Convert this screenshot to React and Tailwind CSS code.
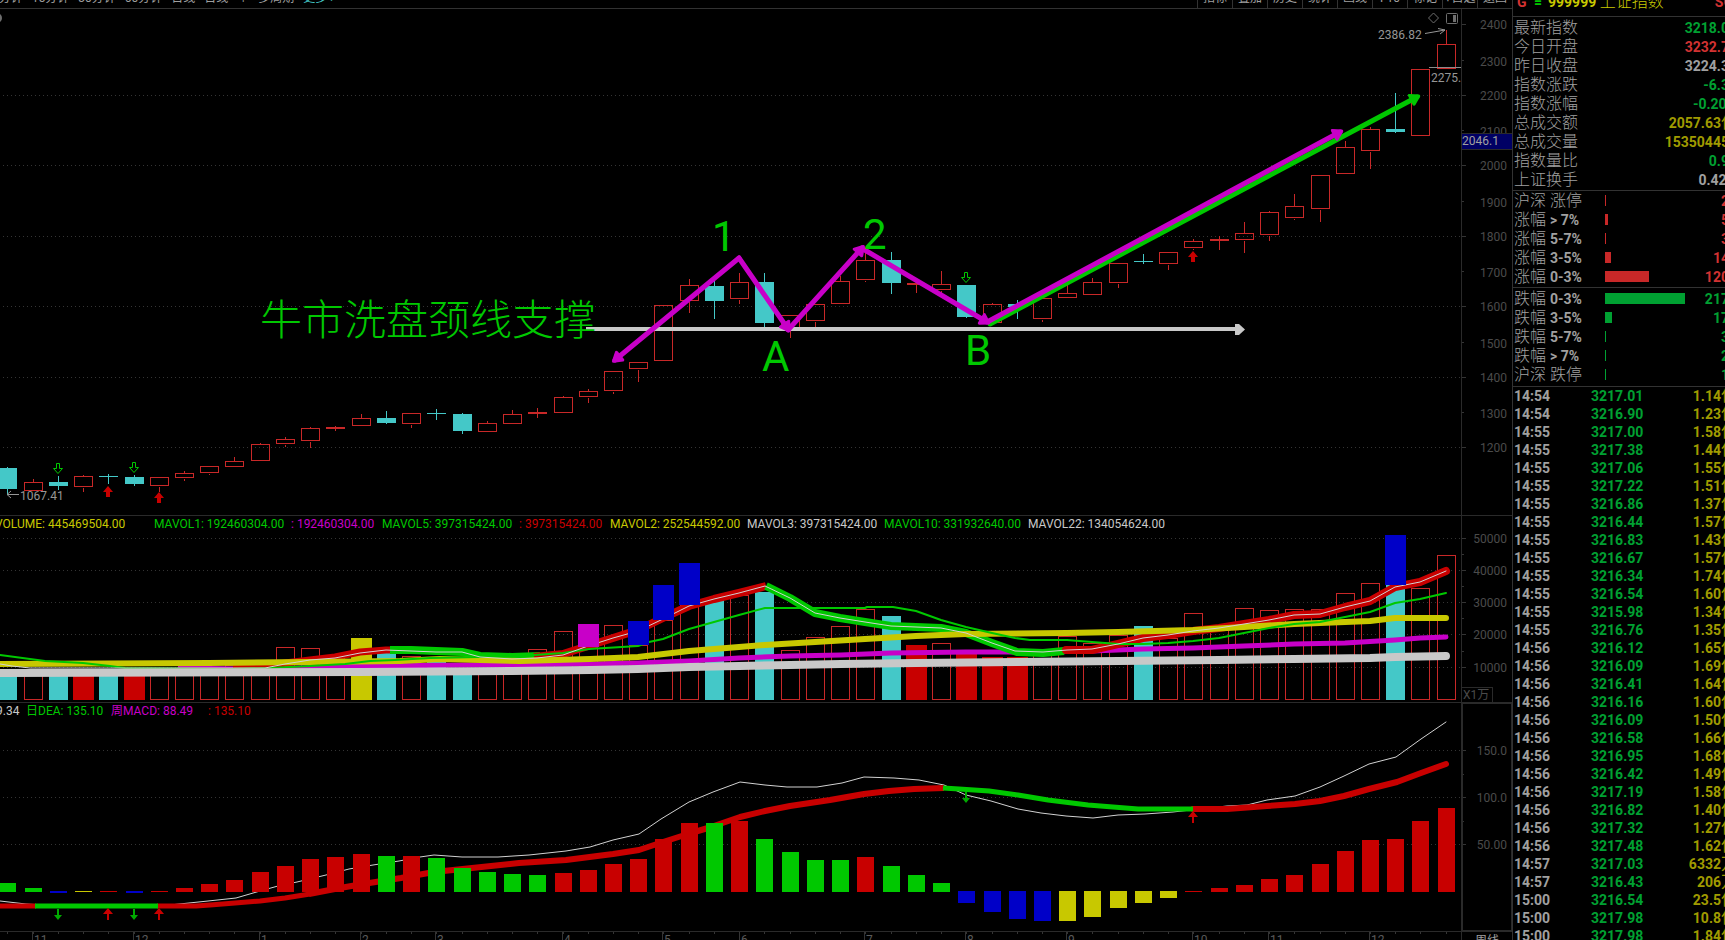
import React from "react";

const UI = "font-['Roboto','Noto_Sans_CJK_SC',sans-serif]";

/* ---------- shared geometry ---------- */

const AXIS_X = 1461;
const FULL_W = 1512;

// Column of the i-th weekly bar.
const col = (i) => Math.floor(7.896 + 25.2335 * i);

const RED = "#c82828";
const CYAN = "#44c8c8";
const LINE = "#2a2a2a";
const DOT = "#343434";
const FILL = { g: "#00c800", r: "#c80000", b: "#0000c8", y: "#c8c800", m: "#c800c8", c: CYAN };

/* ---------- data ---------- */

// kind: o = hollow rise, s = flat rise, c = fall; then high, top, bottom, low
const candles = [
  ["c", 467, 468, 489, 495], ["o", 479, 482, 491, 491], ["c", 476, 482, 486, 490], ["o", 475, 476, 487, 491],
  ["c", 474, 476, 477, 484], ["c", 475, 477, 484, 486], ["o", 477, 477, 486, 491], ["o", 471, 473, 478, 480],
  ["o", 466, 466, 473, 474], ["o", 457, 461, 467, 467], ["o", 443, 444, 461, 461], ["o", 437, 439, 444, 446],
  ["o", 427, 428, 441, 447], ["s", 426, 427, 429, 431], ["o", 414, 418, 426, 426], ["c", 411, 418, 423, 424],
  ["o", 413, 413, 424, 427], ["c", 409, 413, 414, 420], ["c", 413, 414, 431, 434], ["o", 421, 423, 432, 432],
  ["o", 410, 414, 424, 424], ["s", 408, 412, 414, 418], ["o", 396, 397, 413, 413], ["o", 389, 391, 397, 402],
  ["o", 371, 371, 391, 393], ["o", 362, 362, 369, 381], ["o", 305, 305, 361, 361], ["o", 279, 285, 301, 312],
  ["c", 281, 286, 301, 319], ["o", 273, 282, 299, 303], ["c", 273, 282, 323, 327], ["o", 315, 315, 330, 337],
  ["o", 304, 304, 321, 326], ["o", 276, 281, 304, 304], ["o", 252, 260, 280, 281], ["c", 252, 260, 283, 294],
  ["s", 281, 283, 285, 293], ["o", 271, 284, 290, 292], ["c", 285, 285, 317, 318], ["o", 303, 304, 323, 323],
  ["c", 300, 304, 307, 319], ["o", 298, 298, 319, 321], ["o", 285, 293, 298, 298], ["o", 278, 282, 295, 295],
  ["o", 263, 263, 283, 287], ["c", 254, 261, 262, 264], ["o", 252, 252, 264, 269], ["o", 239, 241, 248, 249],
  ["s", 236, 239, 241, 250], ["o", 222, 233, 240, 252], ["o", 211, 212, 235, 240], ["o", 194, 206, 218, 219],
  ["o", 175, 175, 209, 221], ["o", 141, 147, 174, 174], ["o", 127, 129, 151, 168], ["c", 93, 129, 132, 133],
  ["o", 69, 69, 136, 136], ["o", 30, 44, 69, 69],
];

// kind: o = hollow, c = fall, r / y = highlighted; then top
const volumes = [
  ["c", 672], ["o", 670], ["c", 670], ["r", 670], ["c", 670], ["r", 670], ["o", 670], ["o", 670], ["o", 670], ["o", 665],
  ["o", 666], ["o", 647], ["o", 648], ["o", 656], ["y", 638], ["c", 652], ["o", 656], ["c", 661], ["c", 668], ["o", 668],
  ["o", 655], ["o", 649], ["o", 631], ["o", 647], ["o", 625], ["o", 645], ["o", 620], ["o", 605], ["c", 600], ["o", 595],
  ["c", 592], ["o", 650], ["o", 637], ["o", 626], ["o", 609], ["c", 616], ["r", 645], ["o", 643], ["r", 654], ["r", 657],
  ["r", 657], ["o", 650], ["o", 636], ["o", 643], ["o", 635], ["c", 626], ["o", 638], ["o", 613], ["o", 626], ["o", 608],
  ["o", 610], ["o", 609], ["o", 609], ["o", 593], ["o", 583], ["c", 585], ["o", 588], ["o", 555],
];

// bar index, colour, top, bottom
const volumeCaps = [
  [23, "m", 624, 647], [25, "b", 621, 645], [26, "b", 585, 620], [27, "b", 563, 605], [55, "b", 535, 585],
];

// kind, far edge measured from the zero line
const macd = [
  ["g", 883], ["g", 888], ["b", 893], ["y", 892], ["r", 891], ["b", 893], ["r", 891], ["r", 888], ["r", 884], ["r", 880],
  ["r", 872], ["r", 866], ["r", 859], ["r", 857], ["r", 854], ["g", 856], ["r", 856], ["g", 858], ["g", 868], ["g", 872],
  ["g", 874], ["g", 875], ["r", 873], ["r", 870], ["r", 864], ["r", 859], ["r", 839], ["r", 823], ["g", 823], ["r", 821],
  ["g", 839], ["g", 852], ["g", 860], ["g", 860], ["r", 857], ["g", 866], ["g", 875], ["g", 883], ["b", 903], ["b", 912],
  ["b", 919], ["b", 921], ["y", 921], ["y", 917], ["y", 908], ["y", 903], ["y", 898], ["r", 891], ["r", 888], ["r", 885],
  ["r", 879], ["r", 875], ["r", 864], ["r", 851], ["r", 840], ["r", 839], ["r", 821], ["r", 808],
];

const priceAxis = [
  [2400, 24], [2300, 60], [2200, 95], [2100, 130], [2000, 165], [1900, 201], [1800, 236],
  [1700, 271], [1600, 306], [1500, 342], [1400, 377], [1300, 412], [1200, 447],
];

const months = [
  ["11", 32], ["12", 133], ["1", 259], ["2", 360], ["3", 435], ["4", 562], ["5", 662], ["6", 739],
  ["7", 864], ["8", 965], ["9", 1066], ["10", 1192], ["11", 1268], ["12", 1369],
];

const periods = ["5分钟", "15分钟", "30分钟", "60分钟", "日线", "日线", "↑", "多周期"];
const tools = ["指标", "叠加", "历史", "统计", "画线", "F10", "标记", "+自选", "返回"];

const GREEN_T = "text-[#00a032]";
const RED_T = "text-[#d23232]";
const GREY_T = "text-[#a0a0a0]";
const GOLD_T = "text-[#a09b00]";

const quotes = [
  ["最新指数", "3218.03", GREEN_T], ["今日开盘", "3232.75", RED_T], ["昨日收盘", "3224.36", GREY_T],
  ["指数涨跌", "-6.33", GREEN_T], ["指数涨幅", "-0.20%", GREEN_T], ["总成交额", "2057.63亿", GOLD_T],
  ["总成交量", "153504456", GOLD_T], ["指数量比", "0.91", GREEN_T], ["上证换手", "0.42%", GREY_T],
];

const risers = [
  ["沪深", "涨停", 1, "28"], ["涨幅", "> 7%", 3, "55"], ["涨幅", "5-7%", 1, "38"], ["涨幅", "3-5%", 6, "144"], ["涨幅", "0-3%", 44, "1206"],
];
const fallers = [
  ["跌幅", "0-3%", 80, "2175"], ["跌幅", "3-5%", 7, "175"], ["跌幅", "5-7%", 1, "38"], ["跌幅", "> 7%", 1, "24"], ["沪深", "跌停", 1, "11"],
];

const ticks = [
  ["14:54", "3217.01", "1.14亿"], ["14:54", "3216.90", "1.23亿"], ["14:55", "3217.00", "1.58亿"], ["14:55", "3217.38", "1.44亿"],
  ["14:55", "3217.06", "1.55亿"], ["14:55", "3217.22", "1.51亿"], ["14:55", "3216.86", "1.37亿"], ["14:55", "3216.44", "1.57亿"],
  ["14:55", "3216.83", "1.43亿"], ["14:55", "3216.67", "1.57亿"], ["14:55", "3216.34", "1.74亿"], ["14:55", "3216.54", "1.60亿"],
  ["14:55", "3215.98", "1.34亿"], ["14:55", "3216.76", "1.35亿"], ["14:56", "3216.12", "1.65亿"], ["14:56", "3216.09", "1.69亿"],
  ["14:56", "3216.41", "1.64亿"], ["14:56", "3216.16", "1.60亿"], ["14:56", "3216.09", "1.50亿"], ["14:56", "3216.58", "1.66亿"],
  ["14:56", "3216.95", "1.68亿"], ["14:56", "3216.42", "1.49亿"], ["14:56", "3217.19", "1.58亿"], ["14:56", "3216.82", "1.40亿"],
  ["14:56", "3217.32", "1.27亿"], ["14:56", "3217.48", "1.62亿"], ["14:57", "3217.03", "6332万"], ["14:57", "3216.43", "206万"],
  ["15:00", "3216.54", "23.5亿"], ["15:00", "3217.98", "10.8亿"], ["15:00", "3217.98", "1.84亿"],
];

/* ---------- drawing helpers ---------- */

function Grid({ rows }) {
  return rows.map((y) => (
    <g key={y}>
      <line x1="3" x2={AXIS_X} y1={y + 0.5} y2={y + 0.5} stroke={DOT} strokeDasharray="1 3" />
      <line x1={AXIS_X} x2={AXIS_X + 5} y1={y + 0.5} y2={y + 0.5} stroke={DOT} />
    </g>
  ));
}

function ShortTicks({ rows, size = 2 }) {
  return rows.map((y) => <rect key={y} x={AXIS_X + 1} y={y} width={size} height="1" fill={DOT} />);
}

function AxisLabel({ y, children }) {
  return (
    <text x="1507" y={y} textAnchor="end" className="text-[12px]" fill="#4b4b4b">
      {children}
    </text>
  );
}

function Arrow({ from, to, color }) {
  const dx = to[0] - from[0];
  const dy = to[1] - from[1];
  const len = Math.hypot(dx, dy);
  const ux = dx / len;
  const uy = dy / len;
  const tip = [to[0] + ux * 2, to[1] + uy * 2];
  const base = [to[0] - ux * 6, to[1] - uy * 6];
  const pts = [tip, [base[0] - uy * 5, base[1] + ux * 5], [base[0] + uy * 5, base[1] - ux * 5]];
  return (
    <g stroke={color} strokeLinecap="round" strokeLinejoin="round">
      <line x1={from[0]} y1={from[1]} x2={to[0]} y2={to[1]} strokeWidth="5" />
      <polygon points={pts.map((p) => p.join(",")).join(" ")} fill={color} strokeWidth="3" />
    </g>
  );
}

function HollowDown({ x, y }) {
  return (
    <path
      d={`M${x - 2 + 0.5} ${y + 0.5}h3v5h3l-4.5 5l-4.5 -5h3z`}
      fill="none"
      stroke="#00c800"
    />
  );
}

function SolidUp({ x, y }) {
  return <path d={`M${x} ${y}l5 6h-3v5h-4v-5h-3z`} fill="#c80000" />;
}

function SignalDown({ x, y }) {
  return <path d={`M${x - 1} ${y}h2v6h3l-4 5l-4 -5h3z`} fill="#00aa00" />;
}

function SignalUp({ x, y }) {
  return <path d={`M${x} ${y}l5 6h-4v6h-2v-6h-4z`} fill="#c80000" />;
}

function Poly({ points, color, width, cap = "round" }) {
  return (
    <polyline points={points} fill="none" stroke={color} strokeWidth={width} strokeLinejoin="round" strokeLinecap={cap} />
  );
}

/* ---------- panels ---------- */

function PricePanel() {
  return (
    <svg viewBox={`0 9 ${FULL_W} 507`} className="block h-auto w-full" role="img" aria-label="K线">
      <g shapeRendering="crispEdges">
        <Grid rows={[95, 165, 236, 306, 377, 447]} />
        <ShortTicks rows={[60, 130, 201, 271, 342, 412]} />
        <ShortTicks rows={[24]} size={4} />
        <rect x={AXIS_X} y="9" width="1" height="507" fill={LINE} />
        <rect x="0" y="515" width={FULL_W} height="1" fill={LINE} />
      </g>
      {priceAxis.map(([v, y], k) => (
        <AxisLabel key={v} y={y + (k % 2 ? 6 : 5)}>{v}</AxisLabel>
      ))}
      <g shapeRendering="crispEdges">
        <rect x={AXIS_X} y="133" width="51" height="17" fill={LINE} />
        <rect x={AXIS_X + 1} y="134" width="50" height="15" fill="#000064" />
      </g>
      <text x="1462" y="145" className="text-[12px]" fill="#a0a0a0">2046.1</text>

      <g shapeRendering="crispEdges">
        {candles.map(([kind, high, top, bottom, low], i) => {
          const c = col(i);
          if (kind === "o") {
            return (
              <g key={i} fill={RED}>
                {high < top && <rect x={c} y={high} width="1" height={top - high} />}
                {low > bottom && <rect x={c} y={bottom + 1} width="1" height={low - bottom} />}
                <rect x={c - 8.5} y={top + 0.5} width="18" height={bottom - top - 1} fill="none" stroke={RED} />
              </g>
            );
          }
          return (
            <g key={i} fill={kind === "c" ? CYAN : RED}>
              <rect x={c} y={high} width="1" height={low - high} />
              <rect x={c - 9} y={top} width="19" height={bottom - top} />
            </g>
          );
        })}
        <rect x="1429" y="67" width="32" height="1" fill="#8c8c8c" />
      </g>

      <HollowDown x={58} y={463} />
      <HollowDown x={134} y={462} />
      <HollowDown x={966} y={272} />
      <SolidUp x={108} y={486} />
      <SolidUp x={159} y={492} />
      <SolidUp x={1193} y={251} />

      <Arrow from={[990, 324]} to={[1417, 97]} color="#00c800" />
      <Arrow from={[989, 321]} to={[1340, 132]} color="#c800c8" />
      <Arrow from={[863, 249]} to={[987, 322]} color="#c800c8" />
      <g fill="#c8c8c8">
        <rect x="586" y="327" width="650" height="4" />
        <path d="M1235 324h4l6 5.500l-6 5.500h-4z" />
      </g>
      <Arrow from={[739, 258]} to={[615, 360]} color="#c800c8" />
      <Arrow from={[739, 258]} to={[788, 329]} color="#c800c8" />
      <Arrow from={[788, 330]} to={[862, 248]} color="#c800c8" />

      <g fill="#00c800">
        <text x="260" y="335" className="text-[42px] font-light">牛市洗盘颈线支撑</text>
        <text x="712" y="251" className="text-[42px]">1</text>
        <text x="863" y="249" className="text-[42px]">2</text>
        <text x="762" y="371" className="text-[42px]">A</text>
        <text x="965" y="365" className="text-[42px]">B</text>
      </g>

      <g className="text-[12px]" fill="#969696">
        <text x="1378" y="39">2386.82</text>
        <text x="1431" y="82">2275.</text>
        <text x="20" y="500">1067.41</text>
      </g>
      <g stroke="#969696" fill="none">
        <path d="M1425 33.500L1445 30M1438 28.500l7 1.500l-5 4" />
        <path d="M8 494.500H19M11 491l-4 3.500l4 3.500" />
      </g>
      <g stroke="#6e6e6e" fill="none">
        <path d="M1433.500 13l5 5l-5 5l-5 -5z" />
        <rect x="1446.500" y="13.500" width="11" height="10" rx="1" />
        <rect x="1453" y="15" width="3" height="7" fill="#6e6e6e" stroke="none" />
        <circle cx="-3" cy="18" r="4" strokeWidth="2" />
      </g>
    </svg>
  );
}

function VolumePanel() {
  return (
    <svg viewBox={`0 532 ${FULL_W} 171`} className="block h-auto w-full" role="img" aria-label="VOLUME">
      <g shapeRendering="crispEdges">
        <Grid rows={[538, 570, 602, 634, 667]} />
        <ShortTicks rows={[554, 586, 618, 651]} />
        <rect x={AXIS_X} y="532" width="1" height="171" fill={LINE} />
        <rect x="0" y="702" width={FULL_W} height="1" fill={LINE} />
        <rect x="1461.500" y="687.500" width="31" height="15" fill="none" stroke={LINE} />
        {volumes.map(([kind, top], i) => {
          const c = col(i);
          if (kind === "o") {
            return <rect key={i} x={c - 8.5} y={top + 0.5} width="18" height={699 - top} fill="none" stroke={RED} />;
          }
          if (kind === "c") {
            return <rect key={i} x={c - 9} y={top} width="19" height={700 - top} fill={CYAN} />;
          }
          return <rect key={i} x={c - 10} y={top} width="21" height={700 - top} fill={FILL[kind]} />;
        })}
      </g>
      {[[50000, 543], [40000, 575], [30000, 607], [20000, 639], [10000, 672]].map(([v, y]) => (
        <AxisLabel key={v} y={y}>{v}</AxisLabel>
      ))}
      <text x="1463" y="699" className="text-[12px]" fill="#4b4b4b">X1万</text>

      <Poly color="#c800c8" width="5" points="180,668 240,669 300,668 370,666 470,665 590,664 638,663 689,661 739,658 790,656 841,655 891,653 966,652 1015,652 1092,651 1143,649 1193,648 1244,646 1294,644 1345,643 1395,640 1420,638 1446,637" />
      <Poly color="#c80000" width="7" cap="butt" points="233,668 265,668 285,663 310,660 335,657 360,652 386,650 390,650" />
      <Poly color="#00c800" width="8" cap="butt" points="390,650 411,650 436,651 462,652 480,656 512,657 540,656" />
      <Poly color="#c80000" width="8" cap="butt" points="534,657 563,654 588,646 613,638 638,630 663,618 689,606 714,599 739,593 766,586" />
      <Poly color="#00c800" width="8" cap="butt" points="766,586 790,598 815,613 840,618 865,622 891,626 916,627 941,628 966,633 992,643 1017,652 1043,653 1064,651" />
      <Poly color="#c80000" width="8" points="1066,650 1092,650 1118,644 1143,638 1168,635 1193,631 1219,628 1244,624 1269,620 1294,615 1320,614 1345,607 1370,601 1395,587 1420,582 1446,571" />
      <Poly color="#c8c800" width="6" points="0,664 209,663 310,662 400,661 440,659 520,661 590,659 638,657 689,651 739,647 765,645 815,642 865,639 916,636 966,634 1067,633 1118,632 1193,630 1244,627 1294,624 1345,622 1370,621 1395,618 1420,618 1446,618" />
      <Poly color="#00c800" width="2" points="0,655 45,661 83,663 110,666 125,668 230,669 270,668 310,666 345,664 370,661 395,660 430,658 480,657 520,656 563,653 589,649 638,646 649,642 663,639 689,629 714,622 739,615 765,608 865,608 867,607 893,607 916,611 941,620 966,627 992,633 1015,638 1030,640 1067,640 1092,642 1118,644 1143,644 1168,643 1193,641 1219,638 1244,633 1269,628 1294,624 1320,622 1345,617 1370,612 1395,603 1420,599 1446,593" />
      <Poly color="#d2d2d2" width="1" points="0,664 12,666 30,668 125,668 265,668 285,664 310,660 335,658 360,653 386,650 411,651 436,652 462,652 480,657 512,659 537,658 563,655 588,646 613,638 638,631 663,619 689,606 714,599 739,593 765,586 790,598 815,613 840,618 865,622 891,626 916,627 941,628 966,633 992,643 1015,651 1043,652 1067,650 1092,649 1118,644 1143,638 1168,635 1193,631 1219,628 1244,624 1269,620 1294,615 1320,614 1345,607 1370,601 1395,587 1420,582 1446,571" />
      <Poly color="#c8c8c8" width="8" points="-4,673 361,672 512,671 590,670 638,669 689,667 739,666 790,665 841,664 916,663 1017,662 1118,661 1219,660 1294,659 1370,658 1395,657 1446,656" />
      <g shapeRendering="crispEdges">
        {volumeCaps.map(([i, color, top, bottom]) => (
          <rect key={i} x={col(i) - 10} y={top} width="21" height={bottom - top} fill={FILL[color]} />
        ))}
      </g>
    </svg>
  );
}

function MacdPanel() {
  return (
    <svg viewBox={`0 719 ${FULL_W} 213`} className="block h-auto w-full" role="img" aria-label="MACD">
      <g shapeRendering="crispEdges">
        <Grid rows={[750, 797, 844]} />
        <ShortTicks rows={[774, 821]} />
        <rect x={AXIS_X} y="719" width="2" height="213" fill={LINE} />
        <rect x="1511" y="719" width="1" height="213" fill={LINE} />
        <rect x="0" y="931" width={FULL_W} height="1" fill={LINE} />
        <rect x={AXIS_X} y="930" width="51" height="1" fill={LINE} />
      </g>
      <AxisLabel y={755}>150.0</AxisLabel>
      <AxisLabel y={802}>100.0</AxisLabel>
      <AxisLabel y={849}>50.00</AxisLabel>

      <Poly color="#d2d2d2" width="1" points="0,901 26,904 60,906 160,906 189,903 208,901 236,898 260,891 278,886 297,882 326,875 349,869 373,865 399,861 420,857 434,855 462,857 498,857 529,855 566,851 590,847 613,840 639,834 661,819 689,802 713,792 740,782 765,785 787,787 817,787 842,783 864,777 894,778 919,780 944,785 966,795 991,801 1018,809 1041,813 1066,816 1093,818 1118,815 1145,814 1173,812 1227,806 1247,805 1267,800 1295,796 1320,787 1344,776 1369,764 1396,757 1421,739 1446,722" />
      <Poly color="#c80000" width="5" cap="butt" points="0,906 36,906" />
      <Poly color="#c80000" width="5" cap="butt" points="157,906 196,906 210,905 235,903 260,901 285,898 310,894" />
      <Poly color="#c80000" width="6" cap="butt" points="309,894 340,888 363,884 401,878 434,872 472,868 519,863 566,860 613,854 639,850 663,842 691,833 708,828 740,817 765,811 790,806 830,800 864,794 889,791 914,789 944,788" />
      <Poly color="#00c800" width="5" cap="butt" points="35,906 158,906" />
      <Poly color="#c80000" width="6" points="1193,809 1227,809 1267,806 1295,804 1320,801 1344,796 1369,789 1397,782 1421,773 1446,764" />
      <Poly color="#00c800" width="5" cap="butt" points="943,788 959,789 989,791 1018,795 1048,800 1088,805 1138,809 1193,809" />

      <g shapeRendering="crispEdges">
        {macd.map(([kind, edge], i) => {
          const below = kind === "b" || kind === "y";
          return (
            <rect
              key={i}
              x={col(i) - 8}
              y={below ? 891 : edge}
              width="17"
              height={below ? edge - 891 : 892 - edge}
              fill={FILL[kind]}
            />
          );
        })}
      </g>

      <SignalDown x={58} y={909} />
      <SignalUp x={108} y={908} />
      <SignalDown x={134} y={909} />
      <SignalUp x={159} y={908} />
      <SignalDown x={966} y={792} />
      <SignalUp x={1193} y={811} />
    </svg>
  );
}

function TimeAxis() {
  return (
    <svg viewBox={`0 932 ${FULL_W} 18`} className="block h-auto w-full shrink-0" role="img" aria-label="时间轴">
      <g shapeRendering="crispEdges" fill={DOT}>
        {candles.map((_, i) => (
          <rect key={i} x={col(i)} y="932" width="1" height="2" />
        ))}
        {months.map(([, x]) => (
          <rect key={x} x={x} y="932" width="1" height="18" />
        ))}
        <rect x={AXIS_X} y="932" width="1" height="18" fill={LINE} />
      </g>
      <g className="text-[12px]" fill="#5a5a5a">
        {months.map(([m, x]) => (
          <text key={x} x={x + 2} y="944">{m}</text>
        ))}
      </g>
      <text x="1475" y="945" className="text-[12px]" fill="#a0a0a0">周线</text>
    </svg>
  );
}

function Legend({ children, box = false }) {
  return (
    <div className="flex h-4 shrink-0">
      <div className="flex min-w-0 flex-1 overflow-hidden text-[12px] leading-4 whitespace-pre">{children}</div>
      <div className={box ? "w-[51px] border-t border-l-2 border-r border-[#2a2a2a]" : "w-[51px] border-l border-[#2a2a2a]"} />
    </div>
  );
}

function Toolbar() {
  return (
    <header className="flex h-[9px] shrink-0 items-end overflow-hidden border-b border-[#323232] text-[12px] leading-3 text-[#a0a0a0]">
      <nav className="-ml-2 flex flex-1 gap-[9px] pb-1 whitespace-nowrap">
        {periods.map((p, i) => (
          <button key={i} type="button">{p}</button>
        ))}
        <button type="button" className="text-[#44c8c8]">更多 ›</button>
      </nav>
      <div className="flex">
        {tools.map((t) => (
          <button key={t} type="button" className="w-[35px] border-l border-[#323232] pb-1 text-center whitespace-nowrap">
            {t}
          </button>
        ))}
      </div>
    </header>
  );
}

// A figure whose trailing unit (亿, 万) is set larger and lighter than its digits.
function Figure({ value }) {
  const unit = /[亿万]$/.test(value) ? value.slice(-1) : "";
  return (
    <>
      {unit ? value.slice(0, -1) : value}
      {unit && <span className="text-[16px] font-normal">{unit}</span>}
    </>
  );
}

function Breadth({ rows, up }) {
  return (
    <tbody>
      {rows.map(([a, b, w, n], i) => (
        <tr key={i} className="h-[19px]">
          <th scope="row" className="w-[91px] p-0 text-left font-light text-[#a0a0a0]">
            <span className="text-[16px]">{a}</span>
            {b.includes("停") ? (
              <span className="ml-1 text-[16px]">{b}</span>
            ) : (
              <span className="ml-1 text-[14px] font-bold">{b}</span>
            )}
          </th>
          <td className="p-0">
            <div className={up ? "h-[11px] bg-[#c82828]" : "h-[11px] bg-[#00a032]"} style={{ width: w }} />
          </td>
          <td className={up ? "p-0 text-right text-[#d23232]" : "p-0 text-right text-[#00a032]"}>{n}</td>
        </tr>
      ))}
    </tbody>
  );
}

function Sidebar() {
  const table = "w-[223px] table-fixed border-collapse text-[14px] leading-[18px] font-bold whitespace-nowrap";
  return (
    <aside className="flex w-[213px] shrink-0 flex-col overflow-hidden border-l border-[#323232]">
      <div className="flex h-[17px] shrink-0 items-end overflow-hidden border-b border-[#323232] pb-1 pl-[4px] text-[14px] leading-5 font-bold whitespace-nowrap">
        <span className="w-[17px] text-[#d23232]">G</span>
        <span className="w-[14px] text-[#00c800]">=</span>
        <h1 className="flex-1 text-[#c8c800]">
          999999 <span className="text-[16px] font-light">上证指数</span>
        </h1>
        <span className="-mr-2 text-[#d23232]">SG</span>
      </div>
      <div className="shrink-0 border-b border-[#323232] py-px pl-px">
        <table className={table}>
          <tbody>
            {quotes.map(([label, value, color]) => (
              <tr key={label} className="h-[19px]">
                <th scope="row" className="p-0 text-left text-[16px] font-light text-[#a0a0a0]">{label}</th>
                <td className={`p-0 text-right ${color}`}><Figure value={value} /></td>
              </tr>
            ))}
          </tbody>
        </table>
      </div>
      <div className="shrink-0 border-b border-[#323232] pb-px pl-px">
        <table className={table}><Breadth rows={risers} up /></table>
      </div>
      <div className="shrink-0 border-b border-[#323232] pt-px pb-[2px] pl-px">
        <table className={table}><Breadth rows={fallers} /></table>
      </div>
      <div className="shrink-0 pl-px">
        <table className={table}>
          <tbody>
            {ticks.map(([time, price, amount], i) => (
              <tr key={i} className="h-[18px]">
                <td className="w-[77px] p-0 text-[#a0a0a0]">{time}</td>
                <td className="p-0 text-[#00a032]">{price}</td>
                <td className="p-0 text-right text-[#a09b00]"><Figure value={amount} /></td>
              </tr>
            ))}
          </tbody>
        </table>
      </div>
    </aside>
  );
}

export default function App() {
  return (
    <div className={`flex h-screen overflow-hidden bg-black ${UI}`}>
      <main className="flex min-w-0 flex-1 flex-col overflow-hidden">
        <Toolbar />
        <div className="shrink-0"><PricePanel /></div>
        <Legend>
          <span className="-ml-[5px] w-[159px] shrink-0 text-[#c8c800]">VOLUME: 445469504.00</span>
          <span className="w-[137px] shrink-0 text-[#00c800]">MAVOL1: 192460304.00</span>
          <span className="w-[91px] shrink-0 text-[#c800c8]">: 192460304.00</span>
          <span className="w-[137px] shrink-0 text-[#00c800]">MAVOL5: 397315424.00</span>
          <span className="w-[91px] shrink-0 text-[#c80000]">: 397315424.00</span>
          <span className="w-[137px] shrink-0 text-[#c8c800]">MAVOL2: 252544592.00</span>
          <span className="w-[137px] shrink-0 text-[#c8c8c8]">MAVOL3: 397315424.00</span>
          <span className="w-[144px] shrink-0 text-[#00c800]">MAVOL10: 331932640.00</span>
          <span className="shrink-0 text-[#c8c8c8]">MAVOL22: 134054624.00</span>
        </Legend>
        <div className="shrink-0"><VolumePanel /></div>
        <Legend box>
          <span className="-ml-1 w-[30px] shrink-0 text-[#c8c8c8]">9.34</span>
          <span className="w-[85px] shrink-0 text-[#00c800]">日DEA: 135.10</span>
          <span className="w-[97px] shrink-0 text-[#c800c8]">周MACD: 88.49</span>
          <span className="shrink-0 text-[#c80000]">: 135.10</span>
        </Legend>
        <div className="shrink-0"><MacdPanel /></div>
        <TimeAxis />
      </main>
      <Sidebar />
    </div>
  );
}
